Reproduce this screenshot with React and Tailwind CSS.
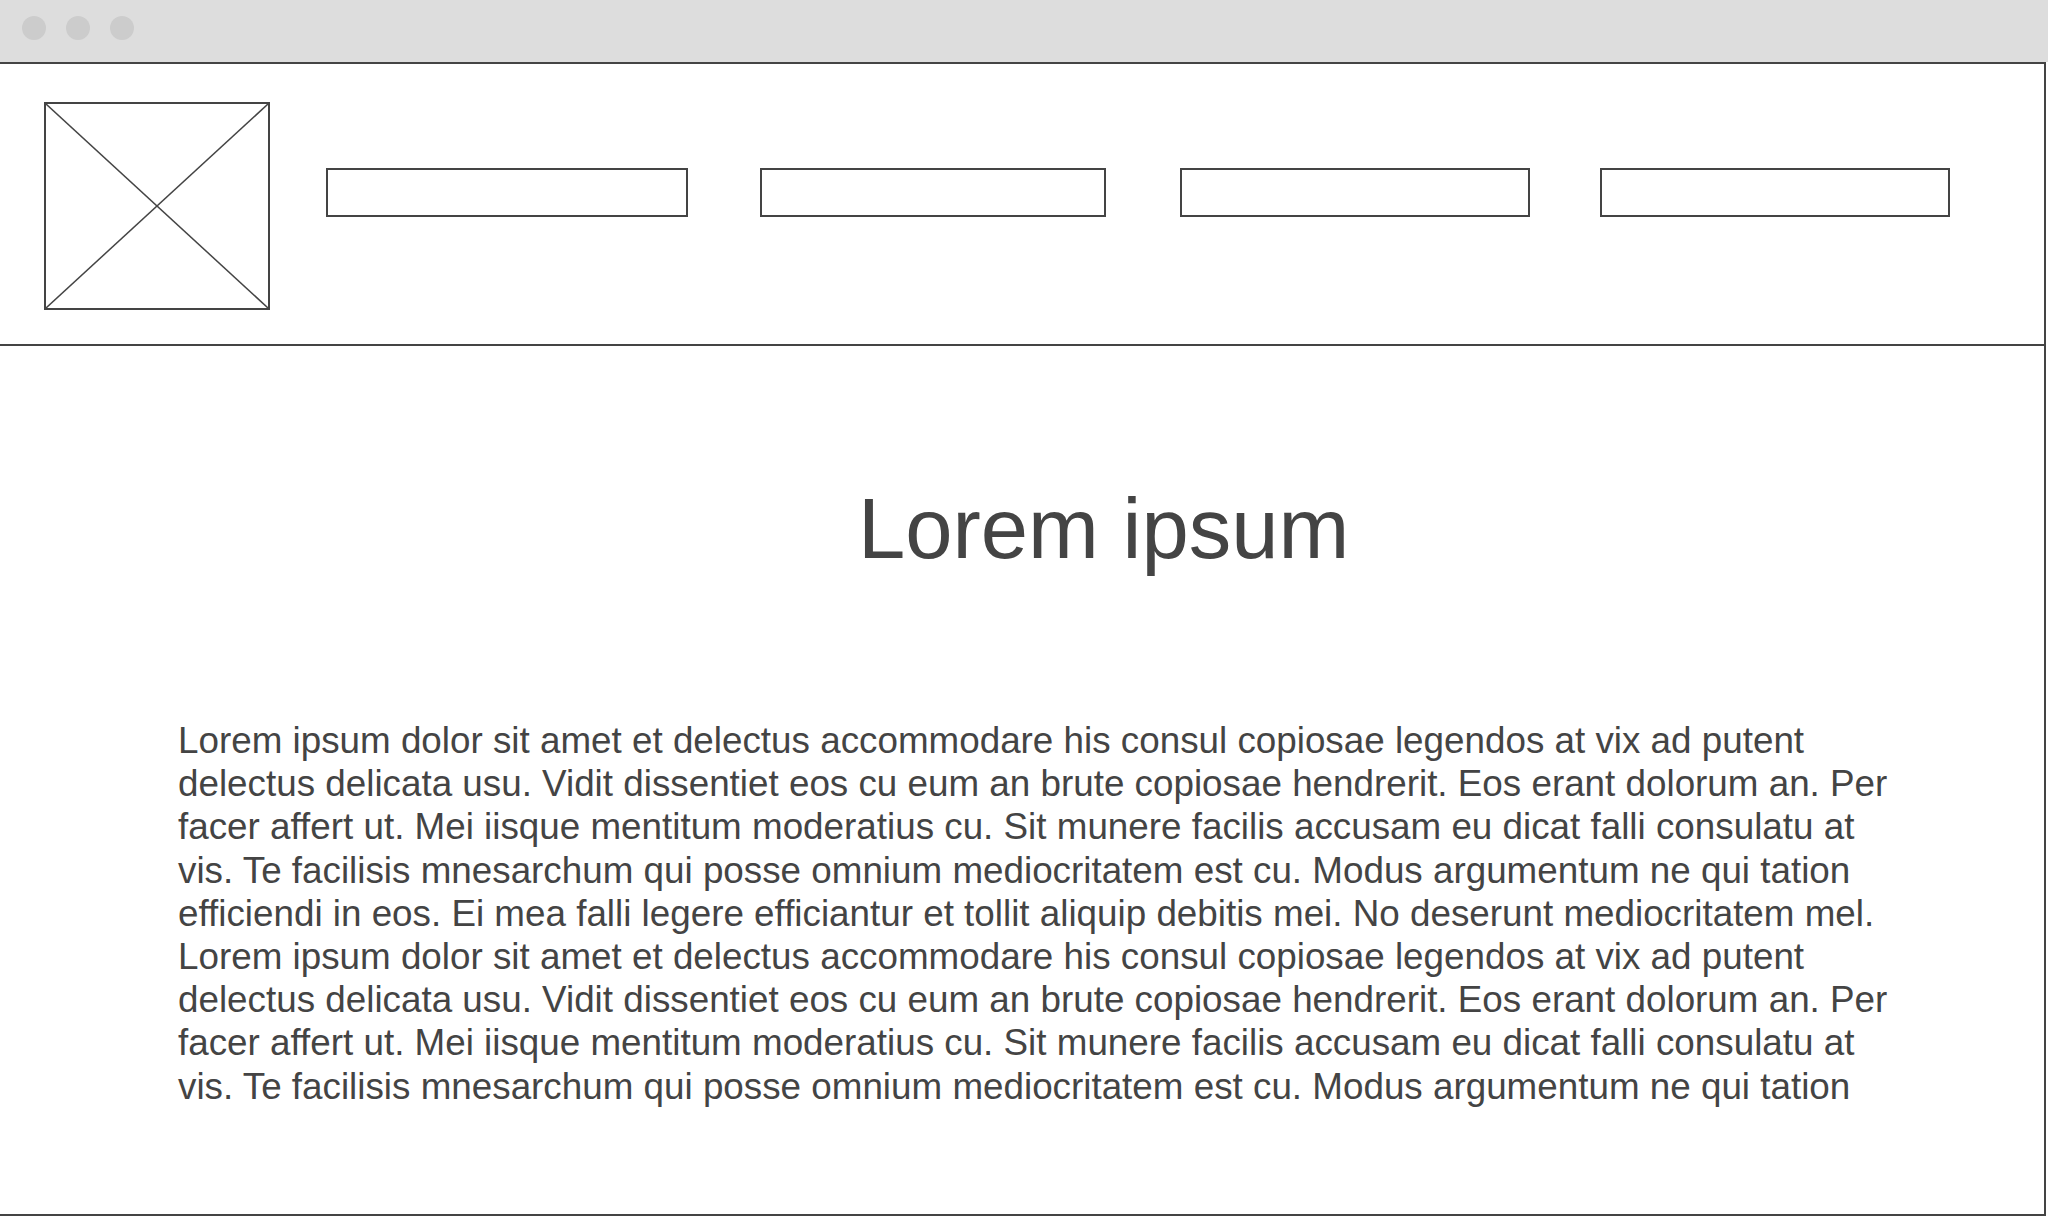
import React from 'react';

const body =
  'Lorem ipsum dolor sit amet et delectus accommodare his consul copiosae legendos at vix ad putent delectus delicata usu. Vidit dissentiet eos cu eum an brute copiosae hendrerit. Eos erant dolorum an. Per facer affert ut. Mei iisque mentitum moderatius cu. Sit munere facilis accusam eu dicat falli consulatu at vis. Te facilisis mnesarchum qui posse omnium mediocritatem est cu. Modus argumentum ne qui tation efficiendi in eos. Ei mea falli legere efficiantur et tollit aliquip debitis mei. No deserunt mediocritatem mel.';

const bodyTail =
  'Lorem ipsum dolor sit amet et delectus accommodare his consul copiosae legendos at vix ad putent delectus delicata usu. Vidit dissentiet eos cu eum an brute copiosae hendrerit. Eos erant dolorum an. Per facer affert ut. Mei iisque mentitum moderatius cu. Sit munere facilis accusam eu dicat falli consulatu at vis. Te facilisis mnesarchum qui posse omnium mediocritatem est cu. Modus argumentum ne qui tation';

const navItems = [
  { w: 'w-[362px]', ml: 'ml-[56px]' },
  { w: 'w-[346px]', ml: 'ml-[72px]' },
  { w: 'w-[350px]', ml: 'ml-[74px]' },
  { w: 'w-[350px]', ml: 'ml-[70px]' },
];

const App = () => {
  return (
    <div className="w-[2048px] h-[1218px] bg-white overflow-hidden font-['Liberation_Sans',Arial,sans-serif] text-[#444444]">
      {/* Browser chrome */}
      <div className="h-[62px] bg-[#dddddd] flex items-start gap-[20px] pl-[22px] pt-[16px]">
        <span className="w-[24px] h-[24px] rounded-full bg-[#cccccc]" />
        <span className="w-[24px] h-[24px] rounded-full bg-[#cccccc]" />
        <span className="w-[24px] h-[24px] rounded-full bg-[#cccccc]" />
      </div>

      <div className="w-[2046px] border-t-2 border-r-2 border-b-2 border-[#444444]">
        {/* Header */}
        <div className="h-[282px] border-b-2 border-[#444444] flex items-start pl-[44px] pt-[38px]">
          <div className="w-[226px] h-[208px] border-2 border-[#444444] shrink-0">
            <svg className="w-full h-full" viewBox="0 0 222 204" preserveAspectRatio="none">
              <line x1="0" y1="0" x2="222" y2="204" stroke="#444444" strokeWidth="1.5" />
              <line x1="222" y1="0" x2="0" y2="204" stroke="#444444" strokeWidth="1.5" />
            </svg>
          </div>
          <div className="flex mt-[66px]">
            {navItems.map((n, i) => (
              <div key={i} className={`${n.w} ${n.ml} h-[49px] border-2 border-[#444444]`} />
            ))}
          </div>
        </div>

        {/* Content */}
        <div className="h-[868px] pt-[140px]">
          <h1 className="text-[85px] leading-none pl-[858px] font-normal">Lorem ipsum</h1>
          <p className="mt-[148px] ml-[178px] w-[1720px] text-[36.8px] leading-[43.2px]">
            {body} {bodyTail}
          </p>
        </div>
      </div>
    </div>
  );
};

export default App;
